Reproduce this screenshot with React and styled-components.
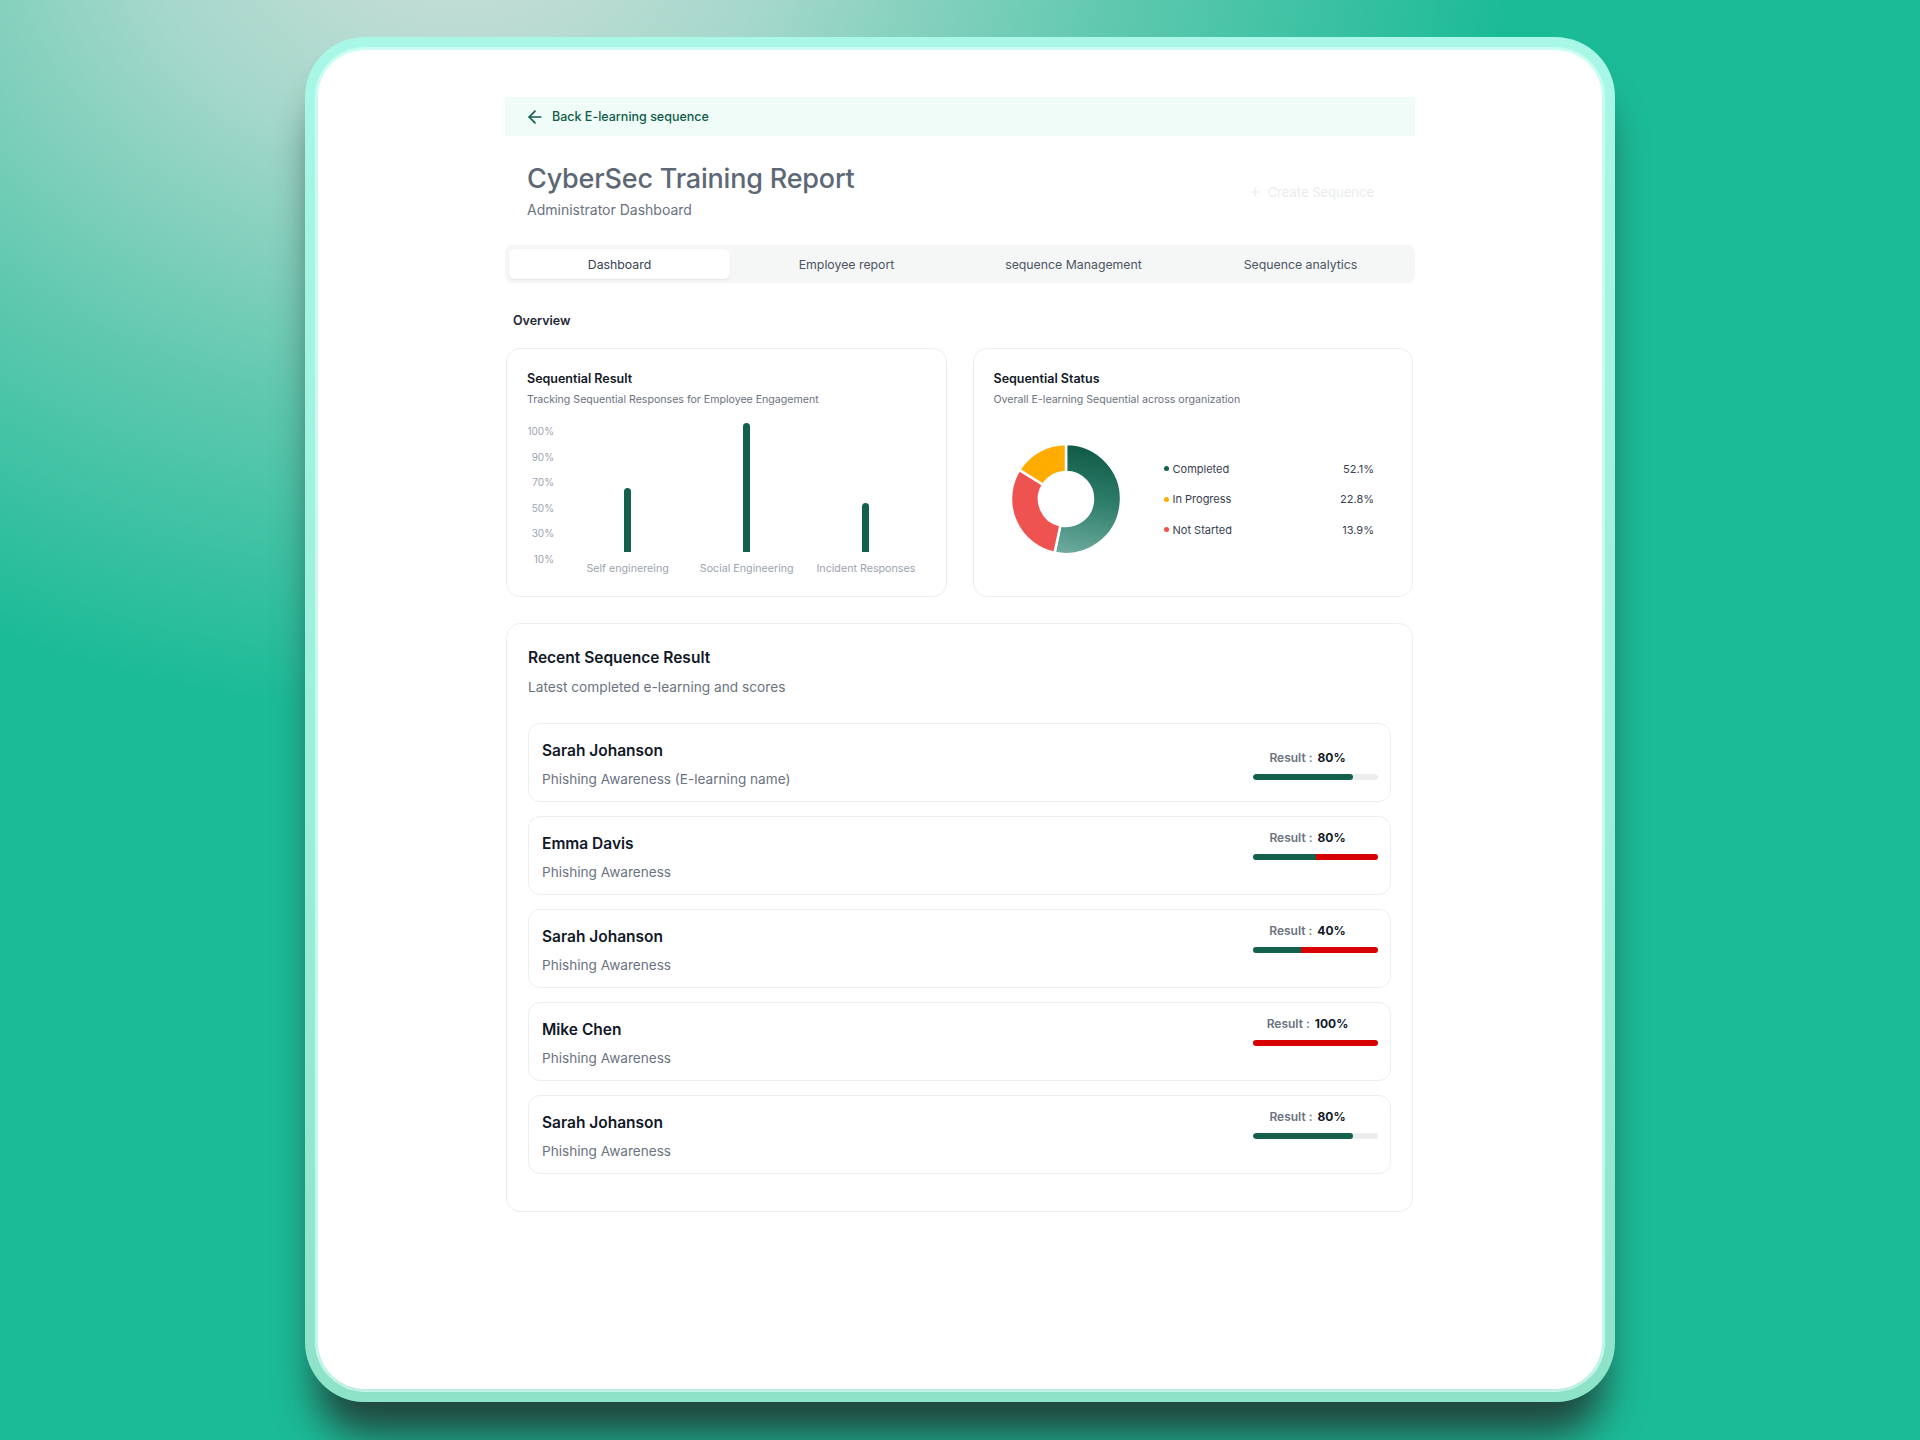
import React, { useState } from "react";
import styled, { createGlobalStyle } from "styled-components";
import { ArrowLeft, Plus } from "lucide-react";

const GlobalStyle = createGlobalStyle`
  * { box-sizing: border-box; }
  body {
    margin: 0;
    font-family: Inter, "Noto Sans", sans-serif;
  }
`;

// Backdrop and device frame
const Stage = styled.div`
  width: 1920px;
  height: 1440px;
  overflow: hidden;
  padding-top: 37px;
  display: flex;
  justify-content: center;
  align-items: flex-start;
  background:
    radial-gradient(ellipse 1050px 800px at 24% -6%, #d0dfdb 0%, #a6d8cb 30%, #62c9b0 62%, rgba(29, 187, 151, 0) 100%),
    #1cbb97;
`;

const Device = styled.div`
  width: 1310px;
  height: 1365px;
  padding: 13px;
  border-radius: 60px;
  background: linear-gradient(180deg, #a8f7e7 0%, #9aeed9 60%, #8ee2c8 100%);
  box-shadow: 0 44px 40px -12px rgba(34, 58, 52, 0.92);
`;

const Screen = styled.div`
  height: 100%;
  background: #fff;
  border-radius: 47px;
  box-shadow: 0 0 0 3px rgba(214, 255, 248, 0.75), 0 2px 2px rgba(60, 90, 80, 0.35);
  padding-top: 47px;
  display: flex;
  justify-content: center;
`;

const Content = styled.main`
  width: 910px;
`;

// Top navigation
const BackBar = styled.a`
  display: flex;
  align-items: center;
  gap: 7px;
  height: 39px;
  padding-left: 20px;
  background: #effcf8;
  color: #0f5c47;
  font-size: 12.5px;
  font-weight: 500;
  text-decoration: none;
  cursor: pointer;
`;

const Header = styled.header`
  display: flex;
  justify-content: space-between;
  align-items: center;
  padding: 27px 41px 0 22px;
`;

const Title = styled.h1`
  margin: 0;
  font-size: 27px;
  line-height: 32px;
  font-weight: 500;
  letter-spacing: -0.2px;
  color: #5d6875;
`;

const Subtitle = styled.p`
  margin: 5px 0 0;
  font-size: 14px;
  line-height: 20px;
  color: #6b7280;
`;

const GhostButton = styled.button`
  display: flex;
  align-items: center;
  gap: 6px;
  padding: 0;
  border: none;
  background: none;
  font-family: inherit;
  font-size: 13px;
  color: #e8edeb;
`;

const Tabs = styled.nav`
  margin-top: 25px;
  display: grid;
  grid-template-columns: repeat(4, 1fr);
  gap: 6px;
  padding: 4px;
  background: #f5f7f6;
  border-radius: 8px;
`;

const Tab = styled.button`
  height: 30px;
  border: none;
  border-radius: 6px;
  font-family: inherit;
  font-size: 12.3px;
  cursor: pointer;
  color: ${(p) => (p.$active ? "#374151" : "#4b5563")};
  background: ${(p) => (p.$active ? "#fff" : "transparent")};
  box-shadow: ${(p) => (p.$active ? "0 1px 2px rgba(0, 0, 0, 0.08)" : "none")};
`;

const SectionLabel = styled.h2`
  margin: 29px 0 0 8px;
  font-size: 12.5px;
  line-height: 18px;
  font-weight: 600;
  color: #1f2937;
`;

// Overview cards
const CardGrid = styled.div`
  margin: 18px 2px 0 1px;
  display: grid;
  grid-template-columns: 1fr 1fr;
  gap: 26px;
`;

const Card = styled.section`
  background: #fff;
  border: 1px solid #eceef0;
  border-radius: 14px;
  padding: 21px 20px 20px;
`;

const CardTitle = styled.h3`
  margin: 0;
  font-size: 12.5px;
  line-height: 17px;
  font-weight: 600;
  color: #111827;
`;

const CardHint = styled.p`
  margin: 5px 0 0;
  font-size: 10.6px;
  line-height: 15px;
  color: #6b7280;
`;

const Chart = styled.div`
  margin-top: 15px;
  display: flex;
`;

const YAxis = styled.div`
  margin-top: 3px;
  width: 27px;
  height: 140px;
  display: flex;
  flex-direction: column;
  justify-content: space-between;
  align-items: flex-end;
  font-size: 10px;
  line-height: 12px;
  color: #9ca3af;
`;

const BarGrid = styled.div`
  flex: 1;
  margin-left: 14px;
  display: grid;
  grid-template-columns: repeat(3, 1fr);
`;

const BarColumn = styled.div`
  display: flex;
  flex-direction: column;
  align-items: center;
`;

const BarSlot = styled.div`
  height: 130px;
  display: flex;
  align-items: flex-end;
`;

const Bar = styled.div`
  width: 7px;
  height: ${(p) => p.$h}px;
  background: #13604c;
  border-radius: 4px 4px 0 0;
`;

const BarLabel = styled.span`
  margin-top: 10px;
  font-size: 10.7px;
  line-height: 13px;
  color: #9ca3af;
  white-space: nowrap;
`;

const StatusBody = styled.div`
  margin-top: 15px;
  height: 154px;
  display: flex;
  align-items: center;
  padding-left: 18px;
`;

const Legend = styled.ul`
  list-style: none;
  margin: 0 18px 0 44px;
  padding: 0;
  flex: 1;
  display: flex;
  flex-direction: column;
  gap: 16.5px;
`;

const LegendRow = styled.li`
  display: flex;
  align-items: center;
  font-size: 11px;
  line-height: 14px;
  color: #374151;
`;

const Dot = styled.i`
  width: 5px;
  height: 5px;
  border-radius: 50%;
  background: ${(p) => p.$color};
  margin-right: 4px;
`;

const LegendValue = styled.span`
  margin-left: auto;
`;

// Recent results
const RecentCard = styled(Card)`
  margin: 26px 2px 0 1px;
  padding: 24px 21px 37px;
`;

const RecentTitle = styled.h3`
  margin: 0;
  font-size: 15.5px;
  line-height: 20px;
  font-weight: 600;
  color: #111827;
`;

const RecentHint = styled.p`
  margin: 9px 0 0;
  font-size: 13.7px;
  line-height: 20px;
  color: #6b7280;
`;

const RowList = styled.div`
  margin-top: 26px;
  display: flex;
  flex-direction: column;
  gap: 14px;
`;

const Row = styled.article`
  display: flex;
  justify-content: space-between;
  align-items: flex-start;
  padding: 16px 12px 12px 13px;
  border: 1px solid #eceef0;
  border-radius: 12px;
`;

const Name = styled.h4`
  margin: 0;
  font-size: 15.5px;
  line-height: 22px;
  font-weight: 600;
  color: #111827;
`;

const Course = styled.p`
  margin: 7px 0 0;
  font-size: 13.6px;
  line-height: 20px;
  color: #6b7280;
`;

const Result = styled.div`
  align-self: ${(p) => (p.$centered ? "center" : "flex-start")};
  margin-top: ${(p) => (p.$centered ? "0" : "-3px")};
  width: 125px;
  display: flex;
  flex-direction: column;
  align-items: center;
`;

const ResultLabel = styled.div`
  padding-right: 16px;
  font-size: 12px;
  line-height: 16px;
  font-weight: 600;
  color: #6b7280;

  b {
    margin-left: 5px;
    font-weight: 700;
    color: #111827;
  }
`;

const Track = styled.div`
  margin-top: 8px;
  width: 100%;
  height: 6px;
  border-radius: 3px;
  background: #eceeee;
  overflow: hidden;
  display: flex;
`;

const Fill = styled.div`
  height: 100%;
  background: ${(p) => p.$color};
  border-radius: ${(p) => (p.$round ? "3px" : "0")};
`;

const tabs = ["Dashboard", "Employee report", "sequence Management", "Sequence analytics"];

const bars = [
  { label: "Self enginereing", h: 64 },
  { label: "Social Engineering", h: 129 },
  { label: "Incident Responses", h: 49 },
];

const statuses = [
  { label: "Completed", value: "52.1%", color: "#13604c" },
  { label: "In Progress", value: "22.8%", color: "#ffab00" },
  { label: "Not Started", value: "13.9%", color: "#ef5350" },
];

const results = [
  { name: "Sarah Johanson", course: "Phishing Awareness (E-learning name)", score: 80, pass: 80, fail: 0, centered: true },
  { name: "Emma Davis", course: "Phishing Awareness", score: 80, pass: 50, fail: 50 },
  { name: "Sarah Johanson", course: "Phishing Awareness", score: 40, pass: 38, fail: 62 },
  { name: "Mike Chen", course: "Phishing Awareness", score: 100, pass: 0, fail: 100 },
  { name: "Sarah Johanson", course: "Phishing Awareness", score: 80, pass: 80, fail: 0 },
];

const polar = (r, deg) => {
  const a = ((deg - 90) * Math.PI) / 180;
  return [54 + r * Math.cos(a), 54 + r * Math.sin(a)];
};

const sector = (from, to, ro, ri) => {
  const [x1, y1] = polar(ro, from);
  const [x2, y2] = polar(ro, to);
  const [x3, y3] = polar(ri, to);
  const [x4, y4] = polar(ri, from);
  const large = to - from > 180 ? 1 : 0;
  return `M${x1} ${y1} A${ro} ${ro} 0 ${large} 1 ${x2} ${y2} L${x3} ${y3} A${ri} ${ri} 0 ${large} 0 ${x4} ${y4} Z`;
};

function Donut() {
  return (
    <svg width="108" height="108" viewBox="0 0 108 108" style={{ overflow: "visible", flexShrink: 0 }}>
      <defs>
        <linearGradient id="completed" gradientUnits="userSpaceOnUse" x1="70" y1="0" x2="50" y2="108">
          <stop offset="0" stopColor="#0f5a46" />
          <stop offset="0.5" stopColor="#2f7f6c" />
          <stop offset="1" stopColor="#6eab9e" />
        </linearGradient>
      </defs>
      <path d={sector(0, 192, 55, 27)} fill="url(#completed)" stroke="#fff" strokeWidth="2.5" strokeLinejoin="round" />
      <path d={sector(192, 302, 55, 27)} fill="#ef5350" stroke="#fff" strokeWidth="2.5" strokeLinejoin="round" />
      <path d={sector(302, 360, 55, 27)} fill="#ffab00" stroke="#fff" strokeWidth="2.5" strokeLinejoin="round" />
    </svg>
  );
}

export default function App() {
  const [active, setActive] = useState(0);

  return (
    <>
      <GlobalStyle />
      <Stage>
        <Device>
          <Screen>
            <Content>
              <BackBar>
                <ArrowLeft size={20} strokeWidth={2} />
                Back E-learning sequence
              </BackBar>

              <Header>
                <div>
                  <Title>CyberSec Training Report</Title>
                  <Subtitle>Administrator Dashboard</Subtitle>
                </div>
                <GhostButton>
                  <Plus size={14} />
                  Create Sequence
                </GhostButton>
              </Header>

              <Tabs>
                {tabs.map((t, i) => (
                  <Tab key={t} $active={i === active} onClick={() => setActive(i)}>
                    {t}
                  </Tab>
                ))}
              </Tabs>

              <SectionLabel>Overview</SectionLabel>

              <CardGrid>
                <Card>
                  <CardTitle>Sequential Result</CardTitle>
                  <CardHint>Tracking Sequential Responses for Employee Engagement</CardHint>
                  <Chart>
                    <YAxis>
                      {["100%", "90%", "70%", "50%", "30%", "10%"].map((v) => (
                        <span key={v}>{v}</span>
                      ))}
                    </YAxis>
                    <BarGrid>
                      {bars.map((b) => (
                        <BarColumn key={b.label}>
                          <BarSlot>
                            <Bar $h={b.h} />
                          </BarSlot>
                          <BarLabel>{b.label}</BarLabel>
                        </BarColumn>
                      ))}
                    </BarGrid>
                  </Chart>
                </Card>

                <Card>
                  <CardTitle>Sequential Status</CardTitle>
                  <CardHint>Overall E-learning Sequential across organization</CardHint>
                  <StatusBody>
                    <Donut />
                    <Legend>
                      {statuses.map((s) => (
                        <LegendRow key={s.label}>
                          <Dot $color={s.color} />
                          {s.label}
                          <LegendValue>{s.value}</LegendValue>
                        </LegendRow>
                      ))}
                    </Legend>
                  </StatusBody>
                </Card>
              </CardGrid>

              <RecentCard>
                <RecentTitle>Recent Sequence Result</RecentTitle>
                <RecentHint>Latest completed e-learning and scores</RecentHint>
                <RowList>
                  {results.map((r, i) => (
                    <Row key={i}>
                      <div>
                        <Name>{r.name}</Name>
                        <Course>{r.course}</Course>
                      </div>
                      <Result $centered={r.centered}>
                        <ResultLabel>
                          Result :<b>{r.score}%</b>
                        </ResultLabel>
                        <Track>
                          {r.pass > 0 && (
                            <Fill $color="#13604c" $round={r.fail === 0} style={{ width: `${r.pass}%` }} />
                          )}
                          {r.fail > 0 && <Fill $color="#d60000" style={{ width: `${r.fail}%` }} />}
                        </Track>
                      </Result>
                    </Row>
                  ))}
                </RowList>
              </RecentCard>
            </Content>
          </Screen>
        </Device>
      </Stage>
    </>
  );
}
